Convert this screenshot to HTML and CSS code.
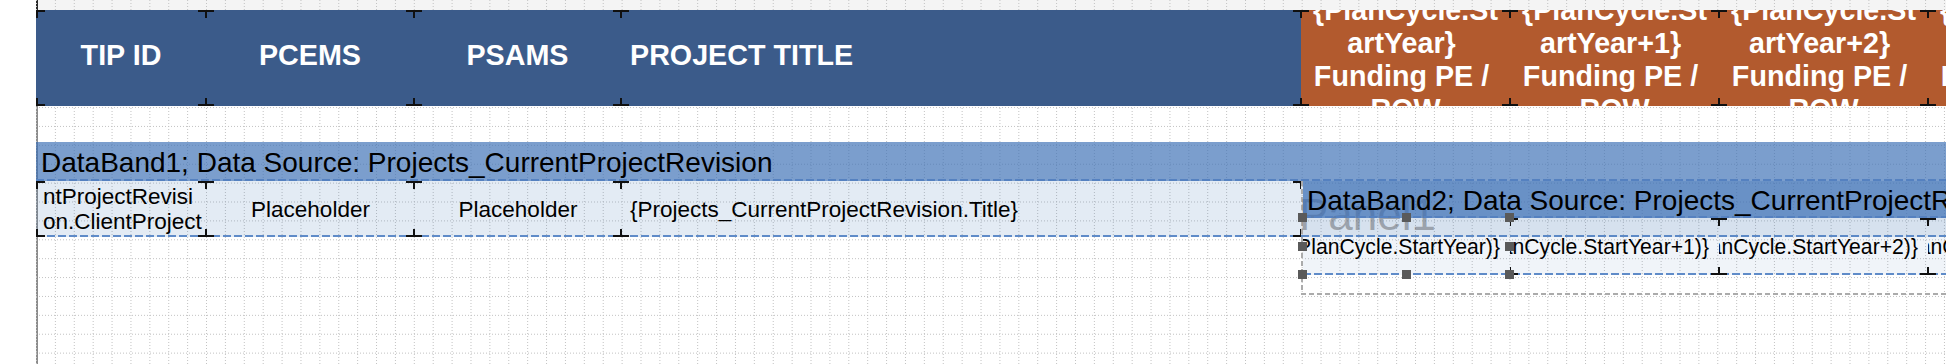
FILE: index.html
```html
<!DOCTYPE html>
<html>
<head>
<meta charset="utf-8">
<title>Report designer</title>
<link rel="stylesheet" href="styles.css">
</head>
<body>
<div class="designer">
  <div class="page">
    <div class="title-strip"></div>

    <div class="header">
      <div class="hcell marks first w1 center"><div class="htext">TIP ID</div></div>
      <div class="hcell marks w2 center"><div class="htext">PCEMS</div></div>
      <div class="hcell marks w3 center"><div class="htext">PSAMS</div></div>
      <div class="hcell marks w4 left"><div class="htext">PROJECT TITLE</div></div>
      <div class="hcell marks w5 orange center"><div class="htext">{PlanCycle.StartYear} Funding PE / ROW</div></div>
      <div class="hcell marks w5 orange center"><div class="htext">{PlanCycle.StartYear+1} Funding PE / ROW</div></div>
      <div class="hcell marks w5 orange center"><div class="htext">{PlanCycle.StartYear+2} Funding PE / ROW</div></div>
      <div class="hcell marks w5 orange center"><div class="htext">{PlanCycle.StartYear+3} Funding PE / ROW</div></div>
    </div>

    <div class="band-gap"></div>

    <div class="band-title">DataBand1; Data Source: Projects_CurrentProjectRevision</div>

    <div class="data-row">
      <div class="dcell marks first w1 left wrap"><div class="dtext">{Projects_CurrentProjectRevision.ClientProjectID}</div></div>
      <div class="dcell marks w2 center"><div class="dtext">Placeholder</div></div>
      <div class="dcell marks w3 center"><div class="dtext">Placeholder</div></div>
      <div class="dcell marks w4 left"><div class="dtext">{Projects_CurrentProjectRevision.Title}</div></div>

      <div class="panel">
        <div class="panel-name">Panel1</div>
        <div class="band2-title">DataBand2; Data Source: Projects_CurrentProjectRevision</div>
        <div class="band2-row">
          <div class="bcell b1 selected">
            <div class="btext"><span>{Projects_CurrentProjectRevision.FundingPE(PlanCycle.StartYear)}</span></div>
            <span class="handle h-tl"></span>
            <span class="handle h-tm"></span>
            <span class="handle h-tr"></span>
            <span class="handle h-ml"></span>
            <span class="handle h-mr"></span>
            <span class="handle h-bl"></span>
            <span class="handle h-bm"></span>
            <span class="handle h-br"></span>
          </div>
          <div class="bcell marks w5">
            <div class="btext"><span>{Projects_CurrentProjectRevision.FundingPE(PlanCycle.StartYear+1)}</span></div>
          </div>
          <div class="bcell marks w5">
            <div class="btext"><span>{Projects_CurrentProjectRevision.FundingPE(PlanCycle.StartYear+2)}</span></div>
          </div>
          <div class="bcell marks w5">
            <div class="btext"><span>{Projects_CurrentProjectRevision.FundingPE(PlanCycle.StartYear+3)}</span></div>
          </div>
        </div>
      </div>
    </div>
  </div>
</div>
</body>
</html>
```

FILE: styles.css
```css
* {
  box-sizing: border-box;
}

html,
body {
  margin: 0;
  padding: 0;
}

body {
  width: 1946px;
  height: 364px;
  overflow: hidden;
  background: #ffffff;
  font-family: "Liberation Sans", Arial, Helvetica, sans-serif;
  color: #000;
}

.designer {
  height: 364px;
  padding-left: 36px;
}

/* report page: dotted 0.5cm grid + left page edge + grey strip on top */
.page {
  --dot: #c2c2c2;
  height: 364px;
  background-image:
    conic-gradient(from 270deg at 1px 1px, var(--dot) 25%, transparent 0),
    conic-gradient(from 270deg at 1px 1px, var(--dot) 25%, transparent 0),
    linear-gradient(#2a2a2a, #2a2a2a),
    linear-gradient(#8c8c8c, #8c8c8c),
    linear-gradient(#f4f4f4, #f4f4f4);
  background-size:
    18.9px 3px,
    3px 18.9px,
    2px 10px,
    2px 100%,
    100% 10px;
  background-position:
    0 0,
    0 12.6px,
    0 0,
    0 0,
    0 0;
  background-repeat: repeat, repeat, no-repeat, no-repeat, no-repeat;
}

.title-strip {
  height: 10px;
}

/* corner marks of report components */
.marks {
  --mk: #101010;
  background-image:
    linear-gradient(var(--mk), var(--mk)),
    linear-gradient(var(--mk), var(--mk)),
    linear-gradient(var(--mk), var(--mk)),
    linear-gradient(var(--mk), var(--mk)),
    linear-gradient(var(--mk), var(--mk)),
    linear-gradient(var(--mk), var(--mk)),
    linear-gradient(var(--mk), var(--mk)),
    linear-gradient(var(--mk), var(--mk));
  background-size:
    8px 2px, 1px 8px,
    8px 2px, 1px 8px,
    8px 2px, 1px 8px,
    8px 2px, 1px 8px;
  background-position:
    left top, left top,
    right top, right top,
    left bottom, left bottom,
    right bottom, right bottom;
  background-repeat: no-repeat;
}

.marks.first {
  background-size:
    9px 2px, 2px 8px,
    8px 2px, 1px 8px,
    9px 2px, 2px 8px,
    8px 2px, 1px 8px;
}

.w1 { width: 170px; }
.w2 { width: 208px; }
.w3 { width: 207px; }
.w4 { width: 680px; }
.w5 { width: 209px; }

/* page header band */
.header {
  display: flex;
  height: 96px;
}

.hcell {
  flex: none;
  height: 96px;
  display: flex;
  flex-direction: column;
  justify-content: center;
  overflow: hidden;
  padding: 0 8px 6px;
  background-color: #3b5b8a;
  color: #ffffff;
  font-weight: bold;
  font-size: 28.7px;
  line-height: 34px;
}

.hcell.orange {
  background-color: #b25a2e;
  padding: 3px 8px 0;
  line-height: 33px;
}

.hcell.left {
  padding-left: 9px;
  text-align: left;
}

.center {
  text-align: center;
}

.left {
  text-align: left;
}

.hcell.orange .htext {
  white-space: break-spaces;
  overflow-wrap: anywhere;
}

.band-gap {
  height: 36px;
}

/* data band header strip */
.band-title {
  height: 39px;
  padding: 5px 0 2px 5px;
  font-size: 28px;
  line-height: 31px;
  white-space: nowrap;
  overflow: hidden;
  background-color: rgba(58, 110, 180, 0.67);
  background-image: repeating-linear-gradient(to right, #5581c0 0 8px, transparent 8px 11px);
  background-size: 100% 2px;
  background-position: left bottom;
  background-repeat: no-repeat;
}

/* data band row */
.data-row {
  position: relative;
  display: flex;
  height: 56px;
  background-color: rgba(58, 110, 180, 0.14);
  background-image: repeating-linear-gradient(to right, #5f8bc8 0 8px, transparent 8px 11px);
  background-size: 100% 2px;
  background-position: left bottom;
  background-repeat: no-repeat;
}

.dcell {
  flex: none;
  height: 56px;
  display: flex;
  flex-direction: column;
  justify-content: center;
  overflow: hidden;
  padding: 0 6px 0 7px;
  font-size: 22.5px;
  line-height: 25px;
  white-space: nowrap;
}

.dcell.w4 {
  padding-left: 9px;
}

.dcell.wrap {
  white-space: normal;
  padding: 0 3px 0 7px;
}

.dcell.wrap .dtext {
  overflow-wrap: anywhere;
  clip-path: inset(25px 0);
}

/* Panel1 with DataBand2 laid over the band */
.panel {
  position: absolute;
  left: 1265px;
  top: 0;
  width: 681px;
  height: 114px;
  z-index: 1;
  padding-left: 2px;
  background-image:
    repeating-linear-gradient(to bottom, #ababab 0 5px, transparent 5px 8px),
    repeating-linear-gradient(to right, #ababab 0 5px, transparent 5px 8px);
  background-size: 2px 100%, 100% 2px;
  background-position: left top, left bottom;
  background-repeat: no-repeat;
}

.panel-name {
  position: absolute;
  left: -2px;
  top: 12px;
  z-index: -1;
  font-size: 44px;
  line-height: 44px;
  color: rgba(100, 100, 100, 0.5);
  white-space: nowrap;
}

.band2-title {
  height: 37px;
  padding: 4px 0 2px 4px;
  font-size: 28px;
  line-height: 31px;
  white-space: nowrap;
  overflow: hidden;
  background-color: rgba(58, 110, 180, 0.72);
  background-image: repeating-linear-gradient(to right, #5581c0 0 8px, transparent 8px 11px);
  background-size: 100% 2px;
  background-position: left bottom;
  background-repeat: no-repeat;
}

.band2-row {
  display: flex;
  height: 57px;
  background-color: rgba(58, 110, 180, 0.08);
  background-image: repeating-linear-gradient(to right, #5f8bc8 0 8px, transparent 8px 11px);
  background-size: 100% 2px;
  background-position: left bottom;
  background-repeat: no-repeat;
}

.bcell {
  flex: none;
  position: relative;
  height: 57px;
}

.bcell.b1 {
  width: 207px;
}

.btext {
  height: 100%;
  display: flex;
  justify-content: flex-end;
  align-items: center;
  overflow: hidden;
  padding: 0 10px 0 0;
  font-size: 21.2px;
  line-height: 25px;
  white-space: nowrap;
}

.btext span {
  flex: none;
}

.handle {
  position: absolute;
  z-index: 2;
  width: 9px;
  height: 9px;
  background: #5a5a5a;
}

.h-tl { left: -5px; top: -5px; }
.h-tm { left: calc(50% - 5px); top: -5px; }
.h-tr { right: -4px; top: -5px; }
.h-ml { left: -5px; top: calc(50% - 5px); }
.h-mr { right: -4px; top: calc(50% - 5px); }
.h-bl { left: -5px; bottom: -4px; }
.h-bm { left: calc(50% - 5px); bottom: -4px; }
.h-br { right: -4px; bottom: -4px; }
```
